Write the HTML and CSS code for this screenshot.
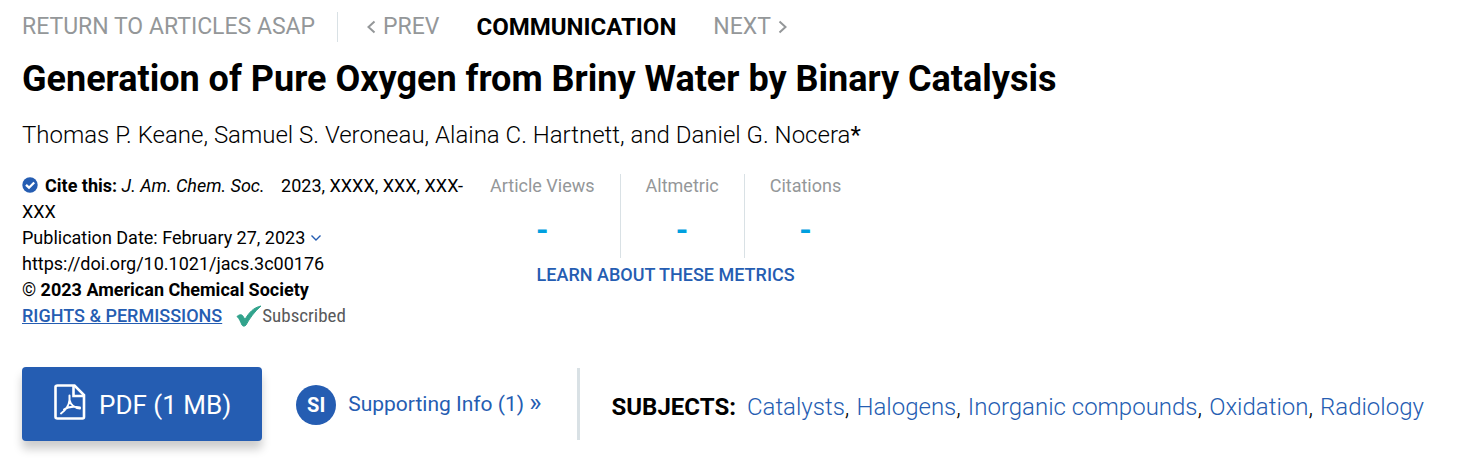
FILE: index.html
```html
<!DOCTYPE html>
<html lang="en">
<head>
<meta charset="utf-8">
<meta name="viewport" content="width=device-width, initial-scale=1">
<title>Generation of Pure Oxygen from Briny Water by Binary Catalysis</title>
<link rel="stylesheet" href="styles.css">
</head>
<body>
<main class="article">
  <nav class="issue-nav" aria-label="Articles">
    <a class="nav-link nav-return" href="#">RETURN TO ARTICLES ASAP</a>
    <a class="nav-link" href="#"><svg class="chevron" viewBox="0 0 9 14" aria-hidden="true"><path d="M7.500 1.500L1.500 7L7.500 12.500"/></svg>PREV</a>
    <span class="nav-type">COMMUNICATION</span>
    <a class="nav-link" href="#">NEXT<svg class="chevron" viewBox="0 0 9 14" aria-hidden="true"><path d="M1.500 1.500L7.500 7L1.500 12.500"/></svg></a>
  </nav>
  <h1 class="title">Generation of Pure Oxygen from Briny Water by Binary Catalysis</h1>
  <p class="authors">Thomas P. Keane, Samuel S. Veroneau, Alaina C. Hartnett, and Daniel G. Nocera<a class="author-note" href="#">*</a></p>

  <div class="details">
    <div class="citation">
      <div><svg class="cite-icon" viewBox="0 0 16 16" aria-hidden="true"><circle cx="8" cy="8" r="7.700" fill="#255db2"/><path d="M4 7.800L7 10.700L12.200 5.500" fill="none" stroke="#fff" stroke-width="2.300"/></svg><b>Cite this:</b> <i class="journal">J. Am. Chem. Soc.</i> 2023, XXXX, XXX, XXX-XXX</div>
      <div>Publication Date: February 27, 2023<svg class="date-arrow" viewBox="0 0 12 8" aria-hidden="true"><path d="M1.500 1.500L6 6L10.500 1.500"/></svg></div>
      <div>https://doi.org/10.1021/jacs.3c00176</div>
      <div>© <b>2023 American Chemical Society</b></div>
      <div class="rights-row">
        <a class="rights" href="#">RIGHTS &amp; PERMISSIONS</a>
        <span class="access"><svg class="tick" viewBox="0 0 26 22" aria-hidden="true"><path d="M1 11.500C3 9.500 5.500 9.300 6.500 10.500L9 14.500C12.500 8 17.500 2.500 25 1C18.500 6.500 13.500 13.500 10 20C8.800 21.500 6.800 21.500 6 20C4.500 17 3.500 13.500 1 11.500Z" stroke="#31a38c" stroke-width="1"/></svg>Subscribed</span>
      </div>
    </div>
    <div class="metrics">
      <dl class="metric-list">
        <div class="metric"><dt>Article Views</dt><dd>-</dd></div>
        <div class="metric"><dt>Altmetric</dt><dd>-</dd></div>
        <div class="metric"><dt>Citations</dt><dd>-</dd></div>
      </dl>
      <a class="learn" href="#">LEARN ABOUT THESE METRICS</a>
    </div>
  </div>

  <div class="actions">
    <a class="pdf" href="#"><svg class="pdf-icon" viewBox="0 0 32 36" aria-hidden="true"><path d="M3.500 1.500H20.500L30 11V33Q30 34.500 28.500 34.500H3.500Q1.500 34.500 1.500 33V3Q1.500 1.500 3.500 1.500Z" stroke-width="2.600"/><path d="M19.500 2V12H30" stroke-width="2.600"/><path d="M15.500 11.500V16C15 21 11 26.500 7 29.500M15.500 16C16.500 20.500 20.500 24 26 24.500M10 25.500C14 22.500 19 22 26 23.500" stroke-width="2" stroke-linecap="round"/></svg>PDF (1 MB)</a>
    <a class="support" href="#"><span class="si">SI</span><span class="support-text">Supporting Info (1) <span class="more">»</span></span></a>
    <div class="subjects">
      <b class="subjects-label">SUBJECTS:</b>
      <span class="subject"><a href="#">Catalysts</a>,</span>
      <span class="subject"><a href="#">Halogens</a>,</span>
      <span class="subject"><a href="#">Inorganic compounds</a>,</span>
      <span class="subject"><a href="#">Oxidation</a>,</span>
      <span class="subject"><a href="#">Radiology</a></span>
    </div>
  </div>
</main>
</body>
</html>
```
FILE: styles.css
```css
* { box-sizing: border-box; }
body {
  margin: 0;
  background: #fff;
  color: #000;
  font-family: Roboto, "Liberation Sans", sans-serif;
  font-size: 18px;
  line-height: 26px;
}
a { color: #255db2; text-decoration: none; }
b { font-weight: 700; }
.article { padding: 12px 22px 28px; }

.issue-nav {
  display: flex;
  flex-wrap: wrap;
  align-items: center;
  gap: 0 37px;
  font-size: 24px;
  line-height: 30px;
}
.nav-link {
  display: flex;
  align-items: center;
  gap: 7px;
  color: #949799;
  font-size: 23px;
}
.nav-return {
  padding-right: 22px;
  margin-right: -8px;
  border-right: 1px solid #d9e1e5;
}
.chevron {
  width: 9px;
  height: 14px;
  fill: none;
  stroke: #949799;
  stroke-width: 2;
}
.nav-type { font-weight: 700; }

.title {
  margin: 16px 0 0;
  font-size: 36px;
  line-height: 42px;
  font-weight: 700;
}
.authors {
  margin: 20px 0 0;
  font-size: 24px;
  line-height: 30px;
  font-weight: 300;
}
.author-note { color: #000; font-weight: 400; }

.details {
  display: flex;
  gap: 24px;
  margin-top: 23px;
}
.citation { flex: 0 1 444px; }
.cite-icon {
  width: 16px;
  height: 16px;
  margin-right: 7px;
  vertical-align: -1px;
}
.journal { margin-right: 12px; }
.date-arrow {
  width: 12px;
  height: 8px;
  margin: 0 0 2px 5px;
  fill: none;
  stroke: #255db2;
  stroke-width: 1.400;
}
.rights-row { display: flex; align-items: center; gap: 14px; }
.rights { font-weight: 500; text-decoration: underline; }
.access {
  display: flex;
  align-items: center;
  color: #58595b;
  font-family: "Roboto Condensed", Roboto, sans-serif;
  font-size: 19px;
}
.tick { width: 26px; height: 22px; fill: #31a38c; }

.metrics { margin-top: 1px; text-align: center; }
.metric-list { display: flex; margin: 0; }
.metric {
  height: 84px;
  padding: 0 25px;
  border-left: 1px solid #d9e1e5;
}
.metric:first-child { padding-left: 0; border-left: 0; }
.metric:last-child { padding-right: 0; }
.metric dt { color: #949799; line-height: 24px; }
.metric dd {
  margin: 14px 0 0;
  color: #00a0df;
  font-size: 32px;
  line-height: 36px;
  font-weight: 700;
}
.learn { display: block; margin-top: 4px; font-weight: 500; }

.actions { display: flex; align-items: center; margin-top: 38px; }
.pdf {
  display: flex;
  align-items: center;
  gap: 13px;
  padding: 17px 31px 15px 32px;
  border-radius: 4px;
  background: #255db2;
  box-shadow: 0 8px 10px rgba(0, 0, 0, .2);
  color: #fff;
  font-size: 26px;
  line-height: 36px;
  white-space: nowrap;
}
.pdf-icon {
  width: 32px;
  height: 36px;
  margin-bottom: 6px;
  fill: none;
  stroke: #fff;
}
.support {
  display: flex;
  align-items: center;
  gap: 12px;
  height: 72px;
  margin-left: 34px;
  padding-right: 35px;
  border-right: 3px solid #d9e1e5;
  font-size: 21px;
  white-space: nowrap;
}
.si {
  width: 40px;
  margin-top: 2px;
  border-radius: 50%;
  background: #255db2;
  color: #fff;
  font-size: 20px;
  line-height: 40px;
  font-weight: 700;
  text-align: center;
}
.support-text { padding-bottom: 2px; }
.more { font-size: 26px; }
.subjects {
  display: flex;
  flex-wrap: wrap;
  gap: 0 7px;
  margin-left: 32px;
  padding-top: 6px;
  font-size: 24px;
  line-height: 30px;
  font-weight: 300;
}
.subjects-label { margin-right: 4px; }
```
